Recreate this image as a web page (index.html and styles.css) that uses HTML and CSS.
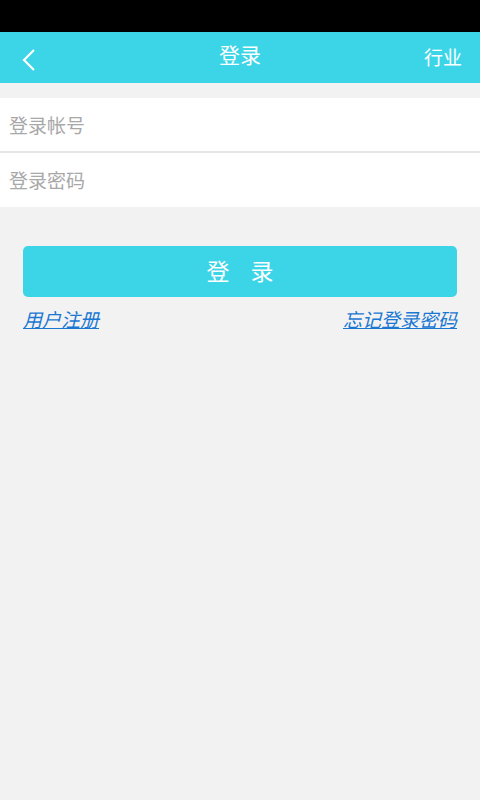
FILE: index.html
```html
<!DOCTYPE html>
<html lang="zh">
<head>
<meta charset="utf-8">
<title>登录</title>
<link rel="stylesheet" href="styles.css">
</head>
<body>
<div class="status"></div>
<header class="bar">
  <span class="back"><svg width="16" height="24" viewBox="0 0 16 24"><path d="M13 2 L3 12 L13 22" fill="none" stroke="#fff" stroke-width="2.2"/></svg></span>
  <h1 class="title">登录</h1>
  <span class="action">行业</span>
</header>
<main class="content">
  <div class="form">
    <div class="field">登录帐号</div>
    <div class="field">登录密码</div>
  </div>
  <div class="actions">
    <button class="btn">登 录</button>
    <div class="links">
      <a class="link">用户注册</a>
      <a class="link">忘记登录密码</a>
    </div>
  </div>
</main>
</body>
</html>
```
FILE: styles.css
```css
html, body {
  margin: 0;
  padding: 0;
}
body {
  width: 480px;
  height: 800px;
  background: #f2f2f2;
  font-family: "Noto Sans CJK SC", "Noto Sans", sans-serif;
  overflow: hidden;
}
.status {
  height: 32px;
  background: #000;
}
.bar {
  height: 51px;
  background: #3cd5e8;
  display: flex;
  align-items: center;
  position: relative;
  padding: 0 18px 0 21px;
}
.back {
  display: flex;
  width: 16px;
  height: 24px;
  margin-top: 4px;
}
.title {
  position: absolute;
  left: 0;
  right: 0;
  top: 0;
  margin: 0;
  text-align: center;
  font-size: 21px;
  font-weight: normal;
  color: #fff;
  line-height: 45px;
  pointer-events: none;
}
.action {
  margin-left: auto;
  margin-bottom: 3px;
  font-size: 19px;
  color: #fff;
}
.content {
  padding-top: 15px;
}
.form {
  display: flex;
  flex-direction: column;
  gap: 2px;
  background: #e6e6e6;
}
.field {
  background: #fff;
  height: 53px;
  line-height: 53px;
  padding-left: 9px;
  font-size: 19px;
  color: #a8a8a8;
}
.form .field:last-child {
  height: 54px;
}
.actions {
  padding: 39px 23px 0 23px;
}
.btn {
  display: block;
  width: 100%;
  height: 51px;
  border: none;
  border-radius: 5px;
  background: #3cd5e8;
  color: #fff;
  font-family: inherit;
  font-size: 23px;
  letter-spacing: 8px;
  text-indent: 8px;
  padding: 0 0 4px 0;
}
.links {
  display: flex;
  justify-content: space-between;
  margin-top: 8px;
}
.link {
  font-size: 19px;
  color: #1a78d2;
  font-style: italic;
  text-decoration: underline;
  line-height: 28px;
}
```
